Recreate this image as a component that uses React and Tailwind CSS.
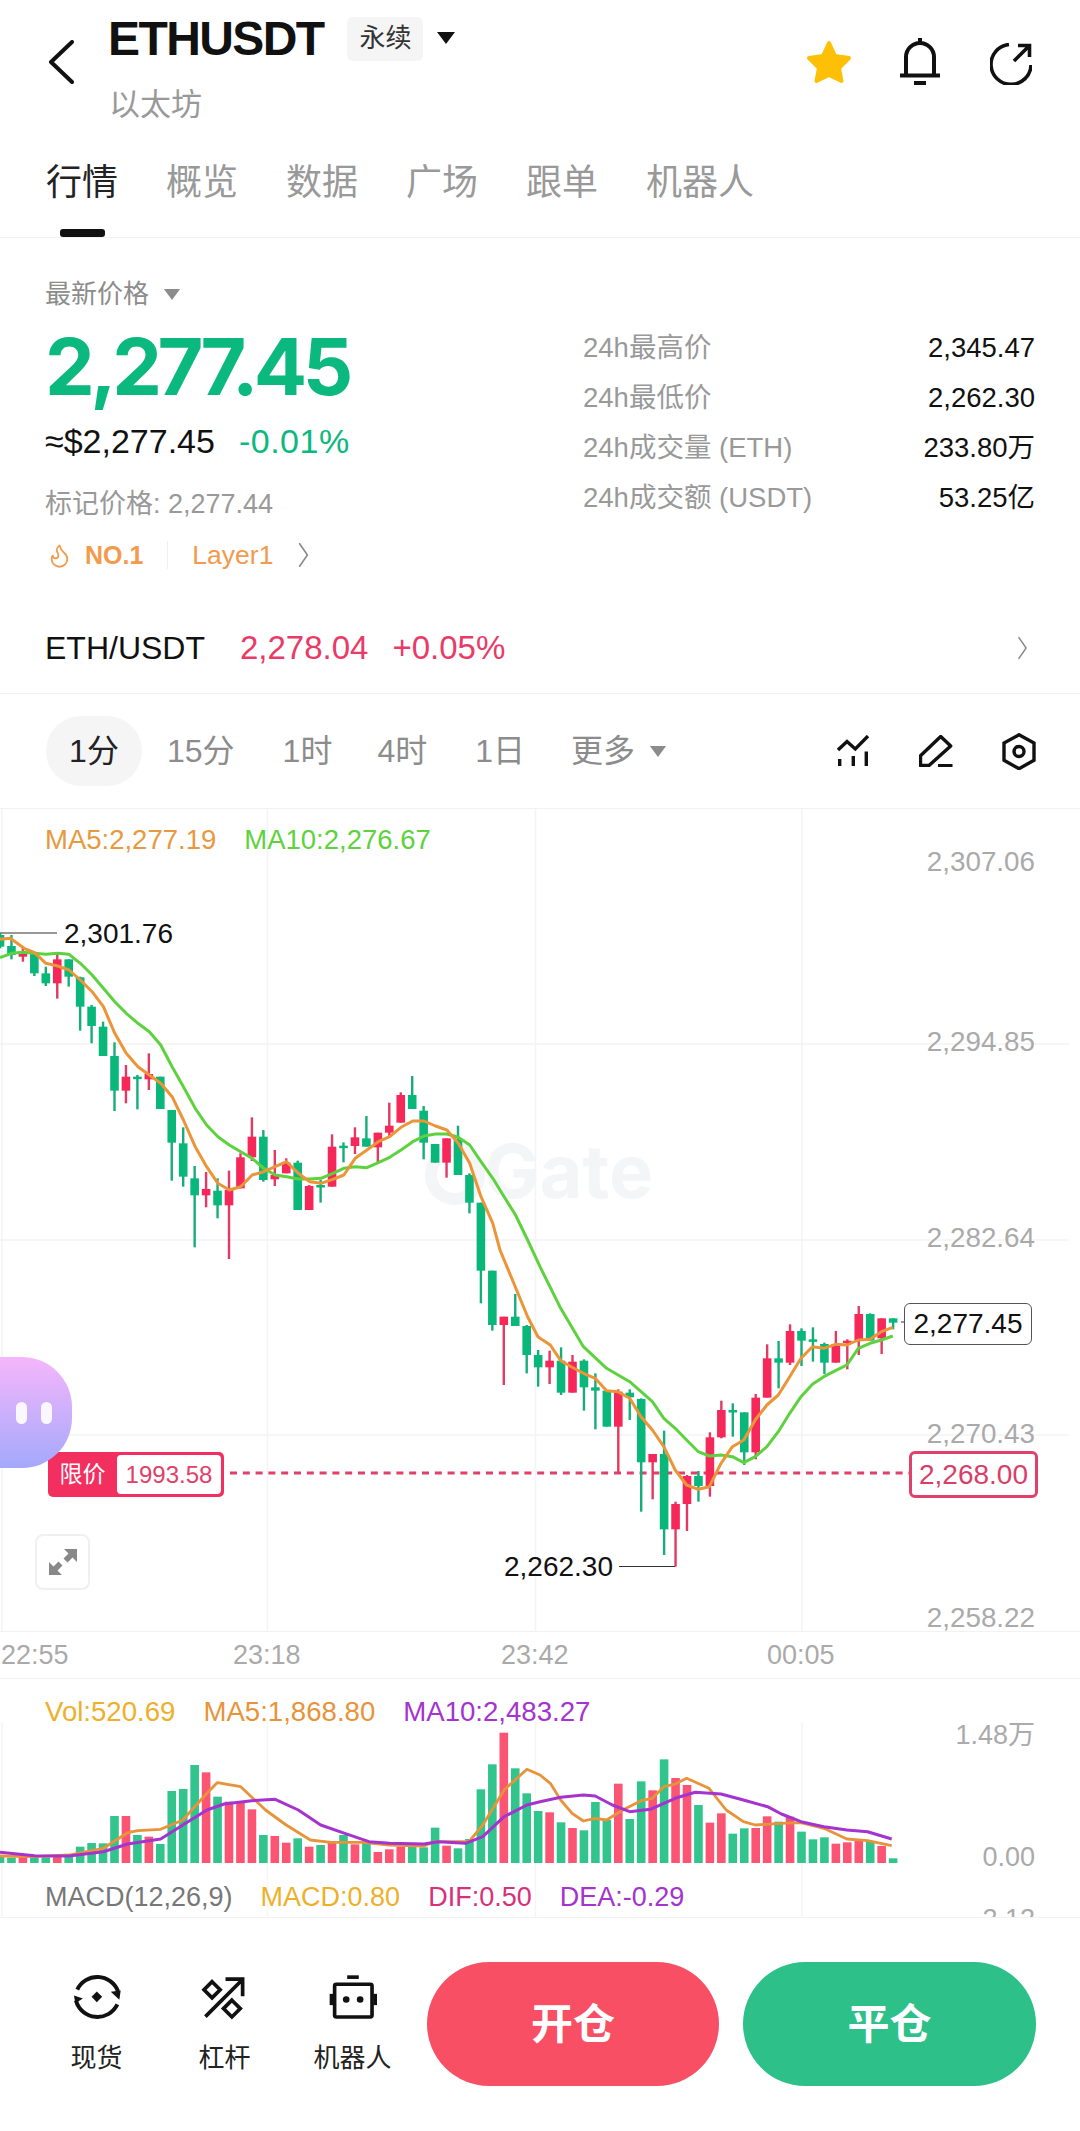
import { Flame } from "lucide-react";

// candle: wick top, body top, body bottom, wick bottom, colour. measured from crops, y = base + v / 3
const upper = [
  [400, 405, 440, 445, "g"], [405, 438, 465, 478, "g"], [443, 458, 470, 485, "r"], [458, 462, 520, 528, "g"],
  [500, 520, 550, 558, "g"], [465, 478, 550, 596, "r"], [478, 478, 530, 560, "g"], [530, 532, 620, 692, "g"],
  [615, 620, 678, 730, "g"], [665, 680, 768, 768, "g"], [727, 768, 872, 933, "g"], [795, 830, 872, 910, "r"],
  [825, 830, 835, 928, "g"], [760, 822, 838, 870, "r"], [830, 830, 927, 927, "g"], [930, 930, 1028, 1142, "g"],
  [982, 1030, 1130, 1160, "g"], [1098, 1135, 1186, 1342, "g"], [1116, 1167, 1186, 1222, "r"], [1135, 1172, 1216, 1255, "g"],
  [1112, 1170, 1216, 1377, "r"], [1060, 1072, 1165, 1165, "r"], [952, 1010, 1072, 1083, "r"], [990, 1010, 1140, 1145, "g"],
  [1050, 1125, 1138, 1158, "r"], [1075, 1088, 1120, 1120, "r"], [1082, 1088, 1230, 1230, "g"], [1155, 1158, 1230, 1230, "r"],
  [1140, 1155, 1160, 1208, "g"], [1003, 1040, 1160, 1160, "r"], [1027, 1037, 1042, 1087, "g"], [982, 1012, 1038, 1062, "r"],
  [948, 1015, 1040, 1040, "g"], [998, 998, 1042, 1092, "r"], [908, 977, 998, 1010, "r"], [877, 885, 968, 968, "r"],
  [828, 885, 927, 927, "g"], [918, 932, 1028, 1078, "g"], [1032, 1032, 1088, 1088, "g"], [1015, 1015, 1088, 1133, "r"],
  [977, 1020, 1125, 1125, "g"], [1120, 1125, 1208, 1240, "g"], [1208, 1208, 1412, 1510, "g"],
];
const lower = [
  [62, 62, 225, 242, "g"], [200, 200, 225, 405, "r"], [132, 200, 228, 228, "g"], [225, 228, 315, 370, "g"],
  [300, 315, 352, 410, "g"], [302, 332, 352, 402, "r"], [292, 332, 428, 435, "g"], [315, 335, 428, 428, "r"],
  [328, 332, 412, 482, "g"], [370, 412, 422, 538, "g"], [420, 422, 530, 530, "g"], [418, 425, 530, 672, "r"],
  [418, 428, 442, 510, "g"], [445, 447, 637, 785, "g"], [612, 612, 637, 748, "r"], [542, 612, 838, 915, "g"],
  [755, 762, 838, 950, "r"], [675, 678, 762, 843, "r"], [663, 678, 708, 755, "g"], [547, 562, 708, 740, "r"],
  [452, 480, 562, 565, "r"], [460, 480, 486, 560, "g"], [487, 487, 607, 645, "g"], [432, 443, 607, 628, "r"],
  [283, 325, 443, 443, "r"], [273, 325, 338, 415, "g"], [223, 243, 338, 345, "r"], [235, 243, 272, 348, "g"],
  [232, 268, 275, 335, "g"], [278, 282, 338, 372, "g"], [243, 282, 338, 338, "r"], [268, 272, 278, 358, "r"],
  [168, 192, 272, 315, "r"], [190, 192, 272, 272, "g"], [205, 205, 265, 312, "r"], [205, 205, 218, 238, "g"],
];
const candles = [
  ...upper.map((c) => [...c.slice(0, 4).map((v) => 800 + v / 3), c[4]]),
  ...lower.map((c) => [...c.slice(0, 4).map((v) => 1250 + v / 3), c[4]]),
];

// crop coordinates to page coordinates
const left = (pts, base) => pts.map(([x, y]) => [x / 2.9, base + y / 3]);
const right = (pts, base) => pts.map(([x, y]) => [540 + x / 2.9, base + y / 3]);
const line = (pts) => pts.map(([x, y]) => `${x.toFixed(1)},${y.toFixed(1)}`).join(" ");

const ma5 = [
  ...left([[0,418],[30,415],[70,445],[100,458],[133,490],[167,498],[200,510],[233,540],[267,575],[300,620],[333,700],[366,760],[400,800],[433,825],[466,850],[499,890],[532,960],[566,1040],[599,1100],[632,1150],[665,1170],[698,1160],[731,1125],[765,1115],[798,1100],[831,1085],[865,1120],[898,1145],[931,1150],[965,1138],[997,1125],[1030,1075],[1064,1050],[1097,1025],[1130,1010],[1163,982],[1197,963],[1230,963],[1263,978],[1296,990],[1329,1030],[1362,1090],[1395,1190],[1429,1270]], 800),
  ...left([[1450,0],[1490,100],[1530,200],[1560,260]], 1250),
  ...right([[0,265],[30,285],[60,332],[93,352],[126,370],[160,385],[193,422],[226,425],[260,445],[293,500],[326,540],[359,590],[392,660],[425,705],[459,718],[491,710],[525,640],[558,590],[591,570],[624,510],[658,465],[691,435],[724,380],[757,325],[790,290],[823,295],[857,283],[890,285],[923,270],[957,268],[990,245],[1023,232]], 1250),
];
const ma10 = [
  ...left([[0,473],[33,460],[67,457],[100,460],[133,463],[167,460],[200,463],[233,490],[267,525],[300,565],[333,605],[366,640],[400,670],[433,695],[466,735],[499,800],[532,860],[566,925],[599,975],[632,1010],[665,1035],[698,1055],[731,1075],[765,1105],[798,1125],[831,1130],[865,1137],[898,1137],[931,1135],[965,1120],[997,1105],[1030,1100],[1064,1103],[1097,1088],[1130,1072],[1163,1050],[1197,1025],[1230,1008],[1263,1002],[1296,1002],[1329,1012],[1362,1035],[1395,1085],[1429,1135],[1462,1190],[1495,1245],[1530,1320]], 800),
  ...right([[0,50],[60,175],[126,290],[193,355],[260,395],[326,455],[359,505],[392,535],[425,570],[459,605],[491,618],[525,615],[558,620],[591,638],[624,620],[658,590],[691,545],[724,490],[757,440],[790,403],[823,380],[857,362],[890,345],[923,295],[957,280],[990,270],[1023,258]], 1250),
];

const volTops = [
  [650,"g"],[653,"g"],[648,"r"],[650,"g"],[652,"g"],[650,"r"],[650,"g"],[620,"g"],[609,"g"],[610,"g"],[528,"g"],[528,"r"],[585,"g"],[590,"r"],[612,"g"],[453,"g"],[447,"g"],[375,"g"],[397,"r"],[470,"g"],[485,"r"],[485,"r"],[508,"r"],[585,"g"],[588,"r"],[608,"r"],[595,"g"],[620,"r"],[615,"g"],[607,"r"],[585,"g"],[613,"r"],[608,"g"],[636,"r"],[628,"r"],[620,"r"],[620,"g"],[622,"g"],[563,"g"],[617,"r"],[625,"g"],[597,"g"],[448,"g"],[373,"g"],[278,"r"],[385,"g"],[460,"g"],[513,"g"],
  [517,"r"],[547,"g"],[564,"r"],[571,"g"],[486,"g"],[540,"g"],[431,"r"],[537,"g"],[424,"g"],[451,"r"],[358,"g"],[414,"r"],[435,"r"],[495,"g"],[548,"r"],[520,"r"],[581,"g"],[565,"g"],[564,"r"],[529,"r"],[545,"g"],[530,"r"],[575,"g"],[598,"g"],[592,"g"],[611,"r"],[607,"r"],[600,"r"],[605,"g"],[618,"r"],[655,"g"],
];
const volMa5 = [
  ...left([[0,648],[100,650],[200,645],[300,625],[370,578],[400,572],[466,568],[530,540],[600,460],[630,428],[698,440],[770,510],[830,555],[900,600],[960,607],[1050,607],[1130,615],[1230,618],[1260,605],[1360,605],[1400,555],[1462,450],[1528,388]], 1640),
  ...right([[0,405],[30,430],[60,480],[93,520],[126,543],[160,535],[193,540],[240,510],[293,482],[326,475],[359,440],[392,432],[425,415],[490,445],[540,510],[590,545],[624,555],[700,550],[757,548],[823,565],[890,597],[950,602],[1020,617]], 1640),
];
const volMa10 = [
  ...left([[0,637],[100,647],[200,648],[300,635],[370,612],[466,597],[530,555],[600,510],[650,492],[730,482],[798,478],[865,510],[930,555],[1000,580],[1070,605],[1130,610],[1230,612],[1270,605],[1350,610],[1400,590],[1462,530],[1528,495]], 1640),
  ...right([[0,485],[60,472],[126,465],[160,468],[210,495],[260,515],[320,508],[392,475],[450,457],[525,462],[590,480],[660,500],[700,522],[757,545],[823,560],[890,570],[950,575],[1020,597]], 1640),
];

const tabs = ["行情", "概览", "数据", "广场", "跟单", "机器人"];
const stats = [
  ["24h最高价", "2,345.47"],
  ["24h最低价", "2,262.30"],
  ["24h成交量 (ETH)", "233.80万"],
  ["24h成交额 (USDT)", "53.25亿"],
];

function Caret({ className }) {
  return (
    <svg viewBox="0 0 20 14" className={className}>
      <path d="M1 1h18L10 13z" fill="currentColor" />
    </svg>
  );
}

function Chevron({ className }) {
  return (
    <svg viewBox="0 0 12 30" className={className} fill="none" stroke="currentColor" strokeWidth="1.8" strokeLinecap="round" strokeLinejoin="round">
      <path d="M1.5 2 10.5 15 1.5 28" />
    </svg>
  );
}

function TopBar() {
  return (
    <div className="flex h-[128px] items-start">
      <svg viewBox="0 0 26 44" className="ml-[48px] mt-[40px] h-[44px] w-[26px]" fill="none" stroke="#111" strokeWidth="4" strokeLinecap="round" strokeLinejoin="round">
        <path d="M24 2 3 22l21 20" />
      </svg>
      <div className="ml-[34px] flex flex-col">
        <div className="flex h-[78px] items-center">
          <span className="text-[48px] font-bold leading-none tracking-[-1.6px] text-[#111]">ETHUSDT</span>
          <span className="ml-[24px] mt-[-1px] flex h-[44px] w-[76px] items-center justify-center rounded-[6px] bg-[#f5f5f5] text-[26px] text-[#333]">永续</span>
          <Caret className="ml-[13px] mt-[-2px] h-[14px] w-[20px] text-[#111]" />
        </div>
        <span className="ml-[1px] mt-[11px] text-[31px] leading-none text-[#999]">以太坊</span>
      </div>
      <div className="ml-auto mr-[48px] mt-[38px] flex items-start">
        <svg viewBox="0 0 46 44" className="mt-[2px] h-[44px] w-[46px]">
          <path d="M23 3l6 13 14 2-10 10 2.500 13L23 35l-12.500 6L13 28 3 18l14-2z" fill="#fdc007" stroke="#fdc007" strokeWidth="4" strokeLinejoin="round" />
        </svg>
        <svg viewBox="0 0 40 47" className="ml-[48px] h-[47px] w-[40px]" fill="none" stroke="#111" strokeWidth="4">
          <path d="M20 0v5M6 37V19a14 14 0 0 1 28 0v18M0 37.500h40M14 45h12" />
        </svg>
        <svg viewBox="0 0 42 42" className="ml-[50px] mt-[5px] h-[42px] w-[42px]" fill="none" stroke="#111" strokeWidth="3.600">
          <path d="M19 1.500A20 20 0 1 0 41 22M24 18 39 3M28 2.500h11.500V14" />
        </svg>
      </div>
    </div>
  );
}

function Tabs() {
  return (
    <div className="flex h-[110px] gap-[48px] border-b border-[#f2f2f2] pl-[46px]">
      {tabs.map((t, i) => (
        <div key={t} className="relative h-full">
          <span className={`block pt-[35px] text-[36px] leading-[40px] ${i === 0 ? "text-[#222]" : "text-[#999]"}`}>{t}</span>
          {i === 0 && <div className="absolute bottom-0 left-[14px] h-[8px] w-[45px] rounded-[3px] bg-[#111]" />}
        </div>
      ))}
    </div>
  );
}

function Stats() {
  return (
    <div className="flex h-[372px] px-[45px] pt-[42px]">
      <div className="w-[538px]">
        <div className="flex h-[28px] items-center text-[26px] leading-none text-[#8c8c8c]">
          最新价格
          <Caret className="ml-[14px] h-[13px] w-[18px] text-[#8c8c8c]" />
        </div>
        <div className="mt-[16px] font-['Inter',sans-serif] text-[79px] font-bold leading-[84px] tracking-[-4.500px] text-[#0bb87e]">2,277.45</div>
        <div className="mt-[15px] flex h-[36px] items-center text-[34px] leading-none">
          <span className="text-[#111]">≈$2,277.45</span>
          <span className="ml-[24px] tracking-[0.5px] text-[#0bb87e]">-0.01%</span>
        </div>
        <div className="mt-[27px] text-[27px] leading-[36px] text-[#999]">标记价格: 2,277.44</div>
        <div className="mt-[15px] flex h-[36px] items-center text-[25px] font-semibold leading-none text-[#f39a4d]">
          <Flame size={27} strokeWidth={1.6} className="ml-[1px]" />
          <span className="ml-[12px]">NO.1</span>
          <span className="mx-[24px] h-[28px] w-px bg-[#f0f0f0]" />
          <span className="text-[26.500px] font-normal">Layer1</span>
          <Chevron className="ml-[24px] h-[26px] w-[13px] text-[#888]" />
        </div>
      </div>
      <div className="mt-[43px] flex h-[200px] flex-1 flex-col text-[27.500px]">
        {stats.map(([k, v]) => (
          <div key={k} className="flex h-[50.500px] items-center justify-between leading-none">
            <span className="text-[#999]">{k}</span>
            <span className="text-[#111]">{v}</span>
          </div>
        ))}
      </div>
    </div>
  );
}

function SpotRow() {
  return (
    <div className="flex h-[84px] items-center border-b border-[#f2f2f2] px-[45px] pb-[8px] text-[33px] leading-none">
      <span className="text-[32px] text-[#111]">ETH/USDT</span>
      <span className="ml-[35px] text-[#e93a68]">2,278.04</span>
      <span className="ml-[24px] text-[#e93a68]">+0.05%</span>
      <Chevron className="ml-auto mr-[7px] h-[24px] w-[11px] text-[#888]" />
    </div>
  );
}

function RangeBar() {
  return (
    <div className="flex h-[115px] items-center border-b border-[#f2f2f2] pl-[46px] pr-[44px] text-[32px] leading-none text-[#8c8c8c]">
      <span className="flex h-[70px] w-[96px] items-center justify-center rounded-full bg-[#f5f5f5] text-[#222]">1分</span>
      <span className="ml-[25px]">15分</span>
      <span className="ml-[48px]">1时</span>
      <span className="ml-[45px]">4时</span>
      <span className="ml-[48px]">1日</span>
      <span className="ml-[46px]">更多</span>
      <Caret className="ml-[14px] h-[13px] w-[18px] text-[#8c8c8c]" />
      <svg viewBox="0 0 32 32" className="ml-auto h-[32px] w-[32px]" fill="none" stroke="#111" strokeWidth="3.400">
        <path d="M1 15 10 6.500 18.300 14 31 1M2.700 24v7M16.300 21v10M29.300 16.500V31" />
      </svg>
      <svg viewBox="0 0 34 32" className="ml-[50px] h-[32px] w-[34px]" fill="none" stroke="#111" strokeWidth="3.400" strokeLinejoin="round">
        <path d="M21.700 1.500 31.700 11 10 30.500H1.500V20.700zM19 30.700h14.500" />
      </svg>
      <svg viewBox="0 0 34 37" className="ml-[49px] h-[37px] w-[34px]" fill="none" stroke="#111" strokeWidth="3.400">
        <path d="M17 1.800 32 10v17.300l-15 8.400-15-8.400V10z" />
        <circle cx="17" cy="18.500" r="5" />
      </svg>
    </div>
  );
}

function CandleChart() {
  return (
    <div className="relative h-[823px] border-b border-[#f2f2f2]">
      <svg viewBox="0 809 1080 823" className="absolute left-0 top-0 h-[823px] w-[1080px]">
        <path d="M0 1044H1069M0 1240H1069M0 1435H1069M2 809V1632M267.500 809V1632M535.500 809V1632M802 809V1632" stroke="#f3f4f5" strokeWidth="1.500" fill="none" />
        {/* watermark */}
        <circle cx="455" cy="1175" r="24" fill="none" stroke="#f3f5f6" strokeWidth="12" />
        <text x="484" y="1198" fontSize="74" fontWeight="700" fontFamily="Inter, sans-serif" fill="#f3f5f6">Gate</text>
        <path d="M230 1473H910" stroke="#e0406a" strokeWidth="3" strokeDasharray="7 5.800" />
        {candles.map(([wt, bt, bb, wb, c], i) => {
          const x = 11.45 * i;
          const fill = c === "g" ? "#0ab77a" : "#f6285a";
          return (
            <g key={i}>
              <rect x={x - 1.2} y={wt} width="2.400" height={wb - wt} fill={c === "g" ? "#16ad7b" : "#e23a63"} />
              <rect x={x - 4.3} y={bt} width="8.600" height={Math.max(bb - bt, 2.500)} fill={fill} />
            </g>
          );
        })}
        <polyline points={line(ma10)} fill="none" stroke="#5dd23e" strokeWidth="3" strokeLinejoin="round" />
        <polyline points={line(ma5)} fill="none" stroke="#eb9538" strokeWidth="3" strokeLinejoin="round" />
        <path d="M0 933H57M619 1566.500H675M901 1322H904.500" stroke="#333" strokeWidth="1.200" />
      </svg>

      <div className="absolute left-[45px] top-[17px] flex gap-[28px] text-[27.500px] leading-[28px]">
        <span className="text-[#e8993e]">MA5:2,277.19</span>
        <span className="text-[#5dd23e]">MA10:2,276.67</span>
      </div>

      <span className="absolute right-[45px] top-[39px] text-[27.800px] leading-[28px] text-[#aaa]">2,307.06</span>
      <span className="absolute right-[45px] top-[219px] text-[27.800px] leading-[28px] text-[#aaa]">2,294.85</span>
      <span className="absolute right-[45px] top-[415px] text-[27.800px] leading-[28px] text-[#aaa]">2,282.64</span>
      <span className="absolute right-[45px] top-[611px] text-[27.800px] leading-[28px] text-[#aaa]">2,270.43</span>
      <span className="absolute right-[45px] top-[795px] text-[27.800px] leading-[28px] text-[#aaa]">2,258.22</span>

      <span className="absolute left-[64px] top-[111px] text-[28px] leading-[28px] text-[#111]">2,301.76</span>
      <span className="absolute left-[504px] top-[744px] text-[28px] leading-[28px] text-[#111]">2,262.30</span>

      <span className="absolute left-[904px] top-[494px] flex h-[42px] w-[128px] items-center justify-center rounded-[6px] border border-[#555] bg-white text-[28px] leading-none text-[#111]">2,277.45</span>

      {/* limit order marker */}
      <div className="absolute left-[48px] top-[643px] flex h-[45px] w-[176px] items-center rounded-[5px] bg-[#f22f5f] pr-[3px]">
        <span className="w-[69px] text-center text-[23px] leading-none text-white">限价</span>
        <span className="flex h-[39px] flex-1 items-center justify-center rounded-[4px] bg-white text-[24px] leading-none text-[#e0406a]">1993.58</span>
      </div>
      <span className="absolute left-[909px] top-[642px] flex h-[47px] w-[129px] items-center justify-center rounded-[6px] border-[3px] border-[#e0406a] bg-white text-[28px] leading-none text-[#d93e69]">2,268.00</span>

      {/* floating assistant */}
      <div className="absolute left-0 top-[548px] flex h-[111px] w-[72px] items-center gap-[14px] rounded-r-[50px] bg-gradient-to-b from-[#f5b6fb] to-[#a3a8fb] pl-[16px]">
        <span className="h-[22px] w-[11px] rounded-full bg-white/90" />
        <span className="h-[22px] w-[11px] rounded-full bg-white/90" />
      </div>

      <div className="absolute left-[35px] top-[725px] flex h-[56px] w-[55px] items-center justify-center rounded-[8px] border-2 border-[#f0f0f0] bg-white">
        <svg viewBox="0 0 28 28" className="h-[28px] w-[28px]" fill="#888">
          <path d="M15 1h13v13l-4.500-4.500-5 5-4-4 5-5zM13 27H0V14l4.500 4.500 5-5 4 4-5 5z" />
        </svg>
      </div>
    </div>
  );
}

function TimeAxis() {
  return (
    <div className="relative h-[47px] border-b border-[#f2f2f2] text-[27px] leading-none text-[#aaa]">
      <span className="absolute left-[1px] top-[10px]">22:55</span>
      <span className="absolute left-[233px] top-[10px]">23:18</span>
      <span className="absolute left-[501px] top-[10px]">23:42</span>
      <span className="absolute left-[767px] top-[10px]">00:05</span>
    </div>
  );
}

function VolumePanel() {
  return (
    <div className="relative h-[238px] overflow-hidden">
      <svg viewBox="0 1679 1080 238" className="absolute left-0 top-0 h-[238px] w-[1080px]">
        <path d="M2 1722V1917M267.500 1722V1917M535.500 1722V1917M802 1722V1917" stroke="#f5f5f6" strokeWidth="1.500" fill="none" />
        {volTops.map(([v, c], i) => {
          const top = 1640 + v / 3;
          return <rect key={i} x={11.45 * i - 4.3} y={top} width="8.600" height={1863 - top} fill={c === "g" ? "#31c48d" : "#fb5573"} />;
        })}
        <polyline points={line(volMa5)} fill="none" stroke="#e8933a" strokeWidth="2.800" strokeLinejoin="round" />
        <polyline points={line(volMa10)} fill="none" stroke="#a433cf" strokeWidth="3" strokeLinejoin="round" />
      </svg>
      <div className="absolute left-[45px] top-[19px] flex gap-[28px] text-[27.600px] leading-[28px]">
        <span className="text-[#eeb02a]">Vol:520.69</span>
        <span className="text-[#e8933a]">MA5:1,868.80</span>
        <span className="text-[#a433cf]">MA10:2,483.27</span>
      </div>
      <span className="absolute right-[45px] top-[42px] text-[27px] leading-[28px] text-[#aaa]">1.48万</span>
      <span className="absolute right-[45px] top-[164px] text-[27px] leading-[28px] text-[#aaa]">0.00</span>
      <div className="absolute left-[45px] top-[204px] flex gap-[28px] text-[27px] leading-[28px]">
        <span className="text-[#777]">MACD(12,26,9)</span>
        <span className="text-[#eeb02a]">MACD:0.80</span>
        <span className="text-[#d6317a]">DIF:0.50</span>
        <span className="text-[#a433cf]">DEA:-0.29</span>
      </div>
      <span className="absolute right-[45px] top-[226px] text-[27px] leading-[28px] text-[#aaa]">2.12</span>
    </div>
  );
}

function SpotIcon() {
  return (
    <svg viewBox="60 30 160 155" className="h-[52px] w-[53px]" fill="none" stroke="#111" strokeWidth="12">
      <path d="M82 85A67 67 0 0 1 205 90M203 130A67 67 0 0 1 78 118" />
      <path d="M183 92l30-4-4 28zM72 103l27 9-23 14z" fill="#111" stroke="none" />
      <path d="M141 91l16 16-16 16-16-16z" fill="#111" stroke="none" />
    </svg>
  );
}

function LeverageIcon() {
  return (
    <svg viewBox="450 40 140 140" className="h-[47px] w-[47px]" fill="none" stroke="#111" strokeWidth="11">
      <path d="M483 63l24 24-24 24-24-24zM542 118l25 25-25 25-25-25zM463 167 570 60M523 55h51v51" />
    </svg>
  );
}

function BotIcon() {
  return (
    <svg viewBox="825 35 155 145" className="h-[48px] w-[52px]" fill="#111">
      <rect x="885" y="42" width="35" height="11" />
      <rect x="847" y="69" width="113" height="99" rx="5" fill="none" stroke="#111" strokeWidth="11" />
      <rect x="832" y="98" width="11" height="34" />
      <rect x="964" y="98" width="11" height="34" />
      <circle cx="882" cy="115" r="10" />
      <circle cx="924" cy="115" r="10" />
    </svg>
  );
}

function Footer() {
  const actions = [
    ["现货", <SpotIcon key="s" />],
    ["杠杆", <LeverageIcon key="l" />],
    ["机器人", <BotIcon key="b" />],
  ];
  return (
    <div className="flex flex-1 items-start border-t border-[#f2f2f2] pt-[44px]">
      <div className="ml-[61px] mt-[9px] flex gap-[57px]">
        {actions.map(([label, icon]) => (
          <div key={label} className="flex w-[71px] flex-col items-center">
            <div className="flex h-[52px] items-center">{icon}</div>
            <span className="mt-[22px] whitespace-nowrap text-[26px] leading-none text-[#222]">{label}</span>
          </div>
        ))}
      </div>
      <button className="ml-[39px] h-[124px] w-[292px] rounded-full bg-[#f84f64] text-[42px] font-bold text-white">开仓</button>
      <button className="ml-[24px] h-[124px] w-[293px] rounded-full bg-[#2dc089] text-[42px] font-bold text-white">平仓</button>
    </div>
  );
}

export default function App() {
  return (
    <div className="flex h-[2131px] w-[1080px] flex-col bg-white font-['Liberation_Sans','Noto_Sans_CJK_SC',sans-serif]">
      <TopBar />
      <Tabs />
      <Stats />
      <SpotRow />
      <RangeBar />
      <CandleChart />
      <TimeAxis />
      <VolumePanel />
      <Footer />
    </div>
  );
}
